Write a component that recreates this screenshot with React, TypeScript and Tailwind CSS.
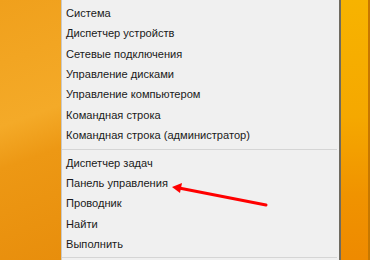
import React from "react";

const groupOne = [
  "Система",
  "Диспетчер устройств",
  "Сетевые подключения",
  "Управление дисками",
  "Управление компьютером",
  "Командная строка",
  "Командная строка (администратор)",
];

const groupTwo = ["Диспетчер задач", "Панель управления", "Проводник", "Найти", "Выполнить"];

const MenuItem: React.FC<{ label: string }> = ({ label }) => (
  <div className="h-[20.4px] flex items-center pl-[4px] text-[11.1px] text-[#1a1a1a] whitespace-nowrap">{label}</div>
);

export default function App() {
  return (
    <div
      className="relative w-[370px] h-[260px] overflow-hidden flex"
      style={{ fontFamily: '"Liberation Sans", Arial, sans-serif' }}
    >
      {/* desktop on the left */}
      <div className="w-[61px] h-full bg-[linear-gradient(160deg,#f0a01c_0%,#f4aa28_45%,#ed9814_60%,#e88e0c_100%)]" />

      {/* the menu */}
      <div className="w-[278px] h-full bg-[#f0f0f0] border-l border-[#c8c8c8] pt-[3px]">
        {groupOne.map((item) => (
          <MenuItem key={item} label={item} />
        ))}
        <div className="mt-[3px] mb-[3px] mr-[2px] h-px bg-[#d5d5d5]" />
        {groupTwo.map((item) => (
          <MenuItem key={item} label={item} />
        ))}
        <div className="mt-[2px] mr-[2px] h-px bg-[#d5d5d5]" />
      </div>

      {/* shadow edge */}
      <div className="w-[2px] h-full bg-[#6e6a60]" />

      {/* desktop on the right */}
      <div className="flex-1 h-full bg-[linear-gradient(180deg,#f7b300_0%,#f5a800_45%,#f09300_75%,#ee8a00_100%)] border-r-2 border-[#c77800]" />

      {/* red pointer arrow */}
      <svg className="absolute left-0 top-0 pointer-events-none" width="370" height="260" viewBox="0 0 370 260">
        <line x1="266" y1="205" x2="179" y2="188" stroke="#ff0000" strokeWidth="3" strokeLinecap="round" />
        <polygon points="172,187 180,193 182,183" fill="#ff0000" />
      </svg>
    </div>
  );
}
